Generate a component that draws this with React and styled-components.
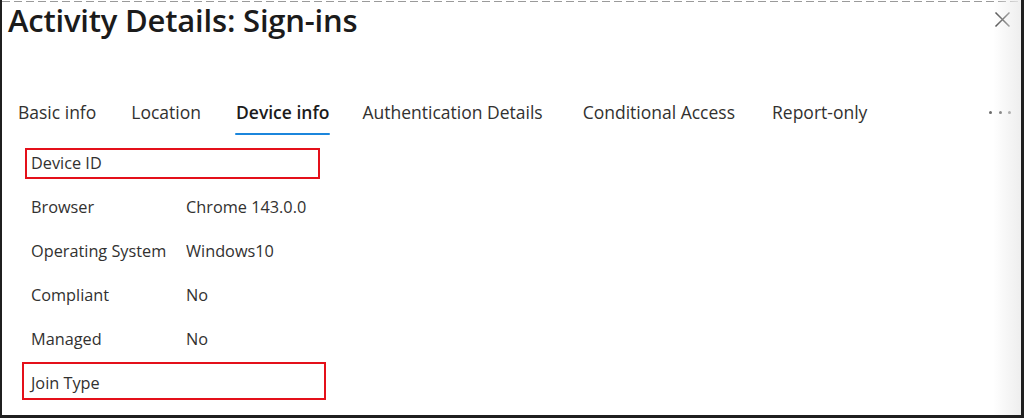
import React from 'react';
import styled, { createGlobalStyle, css } from 'styled-components';

const GlobalStyle = createGlobalStyle`
  html, body {
    margin: 0;
    padding: 0;
    background: #ffffff;
  }
  body {
    font-family: "Open Sans", "Noto Sans", sans-serif;
    color: #323130;
  }
`;

const Frame = styled.div`
  position: relative;
  box-sizing: border-box;
  width: 1024px;
  height: 418px;
  border-left: 2px solid #1f1f1f;
  border-right: 3px solid #1f1f1f;
  border-bottom: 3px solid #1f1f1f;
  background: #ffffff;
  overflow: hidden;

  &::before {
    content: '';
    position: absolute;
    left: 0;
    right: 0;
    top: 1px;
    height: 1px;
    background: repeating-linear-gradient(90deg, #9a9a9a 0 8px, transparent 8px 12px);
  }

  &::after {
    content: '';
    position: absolute;
    top: 0;
    bottom: 0;
    right: 0;
    width: 28px;
    background: linear-gradient(90deg, rgba(240, 240, 240, 0), rgba(236, 236, 236, 0.9));
    pointer-events: none;
  }
`;

const Header = styled.header`
  display: flex;
  justify-content: space-between;
  align-items: flex-start;
  padding: 0 10px 0 6px;
  height: 90px;
`;

const Title = styled.h1`
  margin: 0;
  font-size: 31px;
  font-weight: 600;
  line-height: 40px;
  color: #1b1b1b;
  letter-spacing: -0.2px;
`;

const CloseButton = styled.button`
  border: 0;
  background: none;
  padding: 0;
  margin-top: 11px;
  width: 17px;
  height: 17px;
  display: flex;
  cursor: pointer;
`;

const TabBar = styled.nav`
  display: flex;
  align-items: stretch;
  padding-left: 16px;
  padding-right: 10px;
  height: 44px;
`;

const Tab = styled.div`
  position: relative;
  display: flex;
  align-items: center;
  margin-right: ${p => p.$gap}px;
  font-size: 17.5px;
  color: #323130;
  white-space: nowrap;

  ${p =>
    p.$active &&
    css`
      font-weight: 600;
      color: #1b1b1b;
      &::after {
        content: '';
        position: absolute;
        left: -1px;
        right: -1px;
        bottom: -1px;
        height: 2px;
        background: #1b86dc;
        border-radius: 1px;
      }
    `}
`;

const More = styled.div`
  margin-left: auto;
  display: flex;
  align-items: center;
  gap: 6.5px;
  padding-top: 1px;

  span {
    width: 3px;
    height: 3px;
    border-radius: 50%;
    background: #6b6b6b;
  }
`;

const Details = styled.dl`
  margin: 0;
  padding: 7px 0 0 29px;
  display: flex;
  flex-direction: column;
`;

const Row = styled.div`
  position: relative;
  display: flex;
  align-items: center;
  height: 44px;
  font-size: 16.3px;
`;

const Label = styled.dt`
  width: 155px;
  color: #323130;
`;

const Value = styled.dd`
  margin: 0;
  color: #323130;
`;

const Highlight = styled.span`
  position: absolute;
  box-sizing: border-box;
  left: ${p => p.$left}px;
  top: ${p => p.$top}px;
  width: ${p => p.$width}px;
  height: ${p => p.$height}px;
  border: 2px solid #e4101a;
  pointer-events: none;
`;

const tabs = [
  { label: 'Basic info', gap: 35 },
  { label: 'Location', gap: 35 },
  { label: 'Device info', gap: 33, active: true },
  { label: 'Authentication Details', gap: 40 },
  { label: 'Conditional Access', gap: 37 },
  { label: 'Report-only', gap: 0 },
];

const rows = [
  { label: 'Device ID', value: '', box: { left: -6, top: 7, width: 295, height: 31 } },
  { label: 'Browser', value: 'Chrome 143.0.0' },
  { label: 'Operating System', value: 'Windows10' },
  { label: 'Compliant', value: 'No' },
  { label: 'Managed', value: 'No' },
  { label: 'Join Type', value: '', box: { left: -9, top: 1, width: 304, height: 38 } },
];

const App = () => (
  <>
    <GlobalStyle />
    <Frame>
      <Header>
        <Title>Activity Details: Sign-ins</Title>
        <CloseButton aria-label="Close">
          <svg width="17" height="17" viewBox="0 0 17 17">
            <path d="M1.5 1.5 L15.5 15.5 M15.5 1.5 L1.5 15.5" stroke="#4a4a4a" strokeWidth="1.5" fill="none" />
          </svg>
        </CloseButton>
      </Header>
      <TabBar>
        {tabs.map(t => (
          <Tab key={t.label} $gap={t.gap} $active={t.active}>
            {t.label}
          </Tab>
        ))}
        <More aria-label="More">
          <span />
          <span />
          <span />
        </More>
      </TabBar>
      <Details>
        {rows.map(r => (
          <Row key={r.label}>
            <Label>{r.label}</Label>
            <Value>{r.value}</Value>
            {r.box && <Highlight $left={r.box.left} $top={r.box.top} $width={r.box.width} $height={r.box.height} />}
          </Row>
        ))}
      </Details>
    </Frame>
  </>
);

export default App;
